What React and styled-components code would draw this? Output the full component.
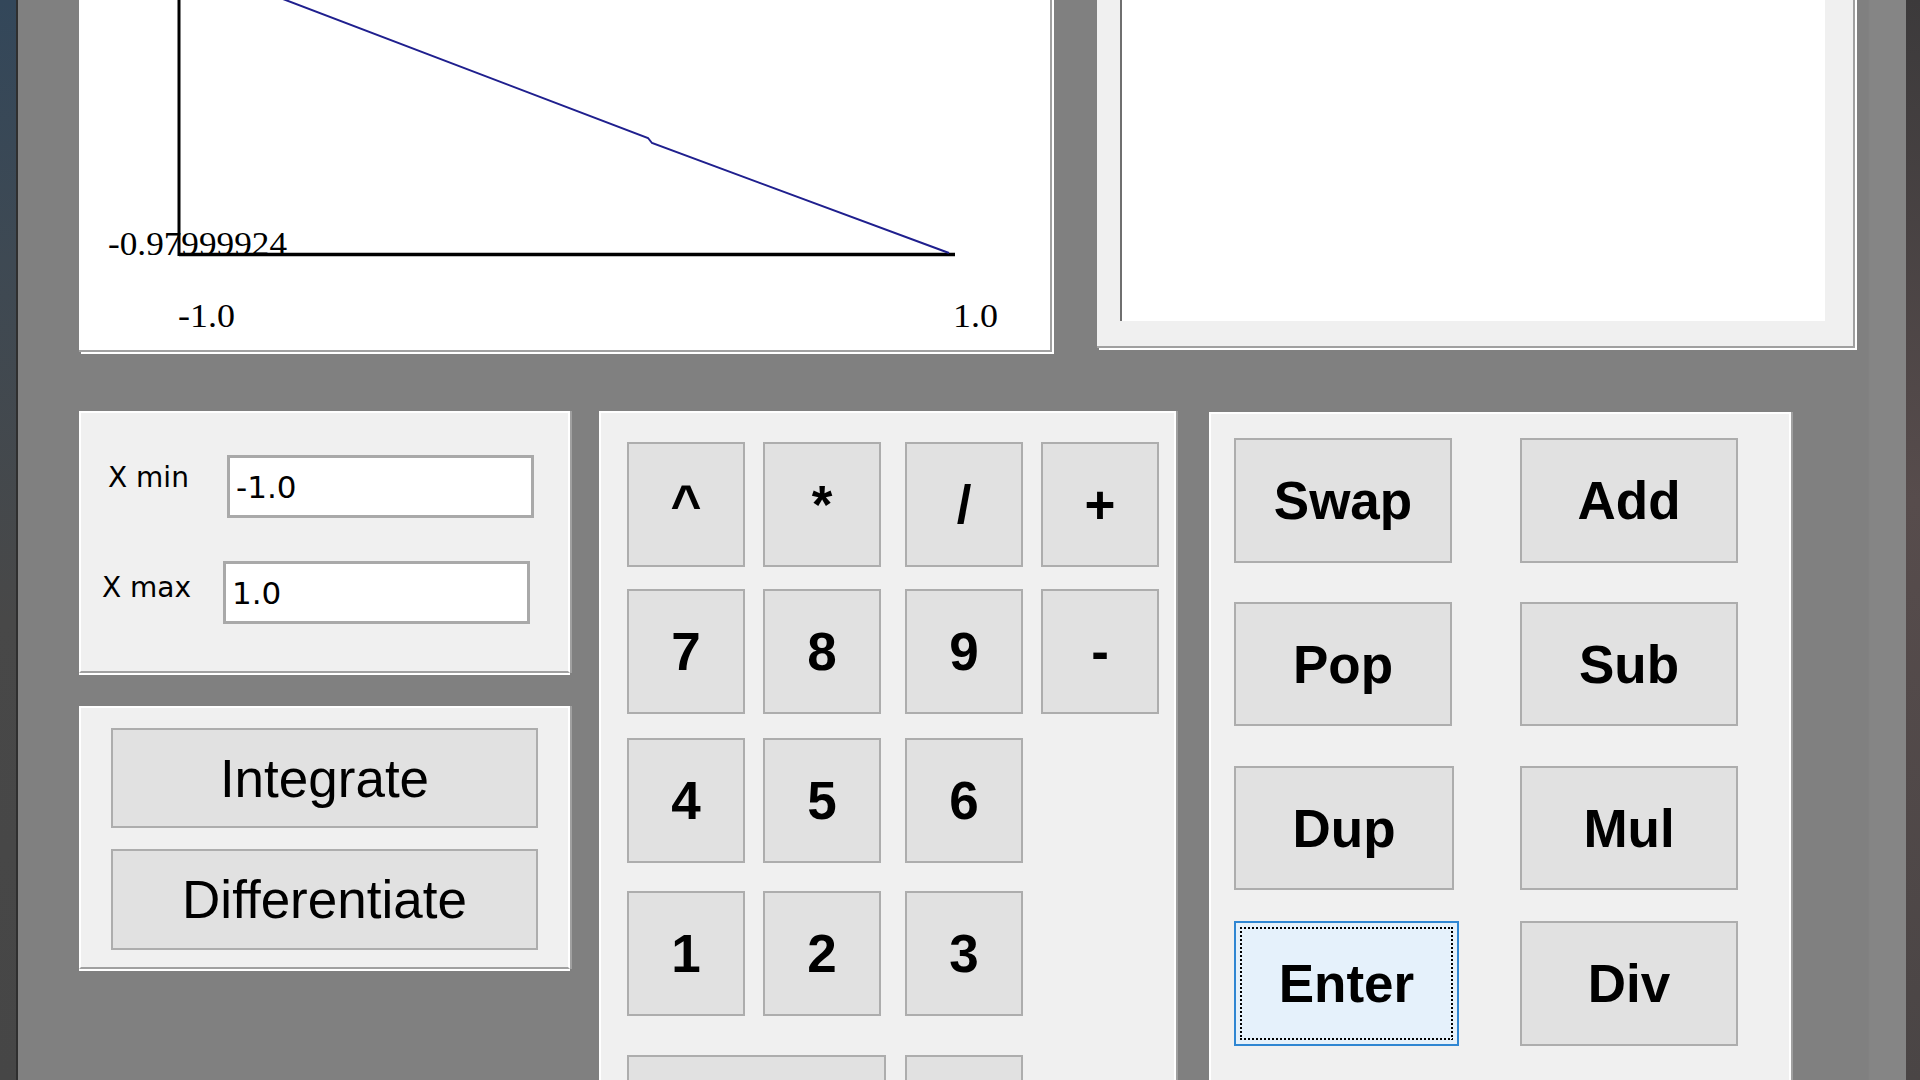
import React from "react";
import styled, { createGlobalStyle, css } from "styled-components";

const GlobalStyle = createGlobalStyle`
  html, body {
    margin: 0;
    padding: 0;
    background: #808080;
    overflow: hidden;
  }
  #root {
    width: 1920px;
    height: 1080px;
  }
`;

const Root = styled.div`
  display: flex;
  width: 1920px;
  height: 1080px;
  overflow: hidden;
  background: #808080;
`;

const LeftStrip = styled.div`
  flex: 0 0 16px;
  background: linear-gradient(#33475a 0, #3e4953 260px, #484848 620px, #464646 100%);
  border-right: 2px solid #2f2f2f;
`;

const RightStrip = styled.div`
  flex: 0 0 14px;
  background: linear-gradient(#3c3a3b 0, #574c4c 500px, #4a4545 100%);
`;

const Content = styled.div`
  flex: 1;
  display: flex;
  flex-direction: column;
  padding-left: 61px;
  background: linear-gradient(90deg, #808080 0, #808080 1850px, #858585 1852px, #858585 100%);
`;

const TopRow = styled.div`
  display: flex;
  align-items: flex-start;
  margin-top: -20px;
`;

const PlotPanel = styled.div`
  flex: 0 0 auto;
  box-sizing: border-box;
  width: 973px;
  height: 372px;
  background: #fff;
  border-right: 2px solid #a0a0a0;
  border-bottom: 2px solid #a0a0a0;
  box-shadow: 2px 2px 0 #fff;
  margin-right: 45px;
`;

const ChartSvg = styled.svg`
  display: block;
`;

const DisplayPanel = styled.div`
  flex: 0 0 auto;
  box-sizing: border-box;
  width: 758px;
  height: 368px;
  display: flex;
  background: #f0f0f0;
  border-right: 2px solid #a0a0a0;
  border-bottom: 2px solid #a0a0a0;
  box-shadow: 2px 2px 0 #fff;
  padding: 0 28px 25px 23px;
`;

const DisplayArea = styled.div`
  flex: 1;
  background: #fff;
  border-left: 2px solid #6f6f6f;
`;

const BottomRow = styled.div`
  display: flex;
  align-items: flex-start;
  margin-top: 59px;
`;

const Panel = styled.div`
  flex: 0 0 auto;
  box-sizing: border-box;
  background: #f0f0f0;
  border: 2px solid #fff;
  border-bottom-color: #a0a0a0;
  box-shadow: 2px 0 0 #a0a0a0, 0 2px 0 #fff;
`;

const LeftColumn = styled.div`
  display: flex;
  flex-direction: column;
  gap: 33px;
`;

const RangePanel = styled(Panel)`
  width: 491px;
  height: 262px;
  padding-top: 42px;
  display: flex;
  flex-direction: column;
  gap: 43px;
`;

const FieldRow = styled.div`
  display: flex;
  align-items: flex-start;
  padding-left: ${(p) => p.$indent}px;
`;

const FieldLabel = styled.label`
  flex: 0 0 ${(p) => p.$width}px;
  margin-top: ${(p) => p.$offset}px;
  font-family: "DejaVu Sans", Verdana, sans-serif;
  font-size: 28px;
  line-height: 28px;
  color: #000;
`;

const TextField = styled.input`
  box-sizing: border-box;
  width: 307px;
  height: 63px;
  margin: 0;
  background: #fff;
  border: 3px solid #a9a9a9;
  padding: 0 0 0 6px;
  font-family: "DejaVu Sans", Verdana, sans-serif;
  font-size: 31px;
  color: #000;
  outline: none;
`;

const ActionPanel = styled(Panel)`
  width: 491px;
  height: 263px;
  padding: 20px 0 0 30px;
  display: flex;
  flex-direction: column;
  gap: 21px;
`;

const buttonBase = css`
  box-sizing: border-box;
  display: flex;
  align-items: center;
  justify-content: center;
  margin: 0;
  padding: 0;
  background: #e1e1e1;
  border: 2px solid #adadad;
  color: #000;
  font-family: "Liberation Sans", Arial, sans-serif;
  font-size: 53px;
  cursor: default;
`;

const ActionButton = styled.button`
  ${buttonBase};
  width: 427px;
  height: ${(p) => p.$h}px;
  font-weight: normal;
`;

const KeypadPanel = styled(Panel)`
  width: 577px;
  height: 720px;
  margin-left: 29px;
  padding: 29px 0 0 26px;
`;

const KeyRow = styled.div`
  display: flex;
  margin-top: ${(p) => p.$gap || 0}px;
`;

const Key = styled.button`
  ${buttonBase};
  flex: 0 0 auto;
  width: ${(p) => p.$w || 118}px;
  height: ${(p) => p.$h || 125}px;
  margin-left: ${(p) => p.$ml || 0}px;
  font-weight: bold;
`;

const StackPanel = styled(Panel)`
  width: 582px;
  height: 720px;
  margin-left: 33px;
  margin-top: 1px;
  padding: 24px 0 0 23px;
`;

const StackRow = styled.div`
  display: flex;
  gap: ${(p) => p.$gap || 68}px;
  margin-top: ${(p) => p.$top || 0}px;
`;

const dots = (dir) =>
  `repeating-linear-gradient(${dir}, #000 0 2px, transparent 2px 4px)`;

const StackButton = styled.button`
  ${buttonBase};
  position: relative;
  width: ${(p) => p.$w || 218}px;
  height: ${(p) => p.$h || 125}px;
  font-weight: bold;
  ${(p) =>
    p.$focused &&
    css`
      background: #e5f1fb;
      border-color: #2f86d2;
      &::after {
        content: "";
        position: absolute;
        inset: 4px;
        background: ${dots("90deg")} top left / 100% 2px no-repeat,
          ${dots("90deg")} bottom left / 100% 2px no-repeat,
          ${dots("180deg")} top left / 2px 100% no-repeat,
          ${dots("180deg")} top right / 2px 100% no-repeat;
      }
    `}
`;

function Chart() {
  return (
    <ChartSvg width="971" height="370" viewBox="0 0 971 370">
      <line x1="100" y1="0" x2="100" y2="276" stroke="#000" strokeWidth="3" />
      <line x1="100" y1="274.5" x2="876" y2="274.5" stroke="#000" strokeWidth="3.5" />
      <polyline
        points="154,0 569,158 573,163 870,273"
        fill="none"
        stroke="#1f1f8e"
        strokeWidth="2"
      />
      <g fontFamily='"Liberation Serif", "Times New Roman", serif' fontSize="33" fill="#000">
        <text x="29" y="275" textLength="179" lengthAdjust="spacingAndGlyphs">
          -0.97999924
        </text>
        <text x="99" y="347" textLength="57" lengthAdjust="spacingAndGlyphs">
          -1.0
        </text>
        <text x="874" y="347" textLength="45" lengthAdjust="spacingAndGlyphs">
          1.0
        </text>
      </g>
    </ChartSvg>
  );
}

const colGaps = [0, 18, 24, 18];

const keyRows = [
  { gap: 0, keys: ["^", "*", "/", "+"] },
  { gap: 22, keys: ["7", "8", "9", "-"] },
  { gap: 24, keys: ["4", "5", "6"] },
  { gap: 28, keys: ["1", "2", "3"] },
];

export default function App() {
  return (
    <>
      <GlobalStyle />
      <Root>
        <LeftStrip />
        <Content>
          <TopRow>
            <PlotPanel>
              <Chart />
            </PlotPanel>
            <DisplayPanel>
              <DisplayArea />
            </DisplayPanel>
          </TopRow>
          <BottomRow>
            <LeftColumn>
              <RangePanel>
                <FieldRow $indent={27}>
                  <FieldLabel $width={119} $offset={9}>
                    X min
                  </FieldLabel>
                  <TextField defaultValue="-1.0" />
                </FieldRow>
                <FieldRow $indent={21}>
                  <FieldLabel $width={121} $offset={13}>
                    X max
                  </FieldLabel>
                  <TextField defaultValue="1.0" />
                </FieldRow>
              </RangePanel>
              <ActionPanel>
                <ActionButton $h={100}>Integrate</ActionButton>
                <ActionButton $h={101}>Differentiate</ActionButton>
              </ActionPanel>
            </LeftColumn>
            <KeypadPanel>
              {keyRows.map((row, i) => (
                <KeyRow key={i} $gap={row.gap}>
                  {row.keys.map((k, j) => (
                    <Key key={k} $ml={colGaps[j]}>
                      {k}
                    </Key>
                  ))}
                </KeyRow>
              ))}
              <KeyRow $gap={39}>
                <Key $w={259} aria-label="0" />
                <Key $ml={19} aria-label="." />
              </KeyRow>
            </KeypadPanel>
            <StackPanel>
              <StackRow>
                <StackButton>Swap</StackButton>
                <StackButton>Add</StackButton>
              </StackRow>
              <StackRow $top={39}>
                <StackButton $h={124}>Pop</StackButton>
                <StackButton $h={124}>Sub</StackButton>
              </StackRow>
              <StackRow $top={40} $gap={66}>
                <StackButton $w={220} $h={124}>Dup</StackButton>
                <StackButton $h={124}>Mul</StackButton>
              </StackRow>
              <StackRow $top={31} $gap={61}>
                <StackButton $w={225} $focused>
                  Enter
                </StackButton>
                <StackButton>Div</StackButton>
              </StackRow>
            </StackPanel>
          </BottomRow>
        </Content>
        <RightStrip />
      </Root>
    </>
  );
}
